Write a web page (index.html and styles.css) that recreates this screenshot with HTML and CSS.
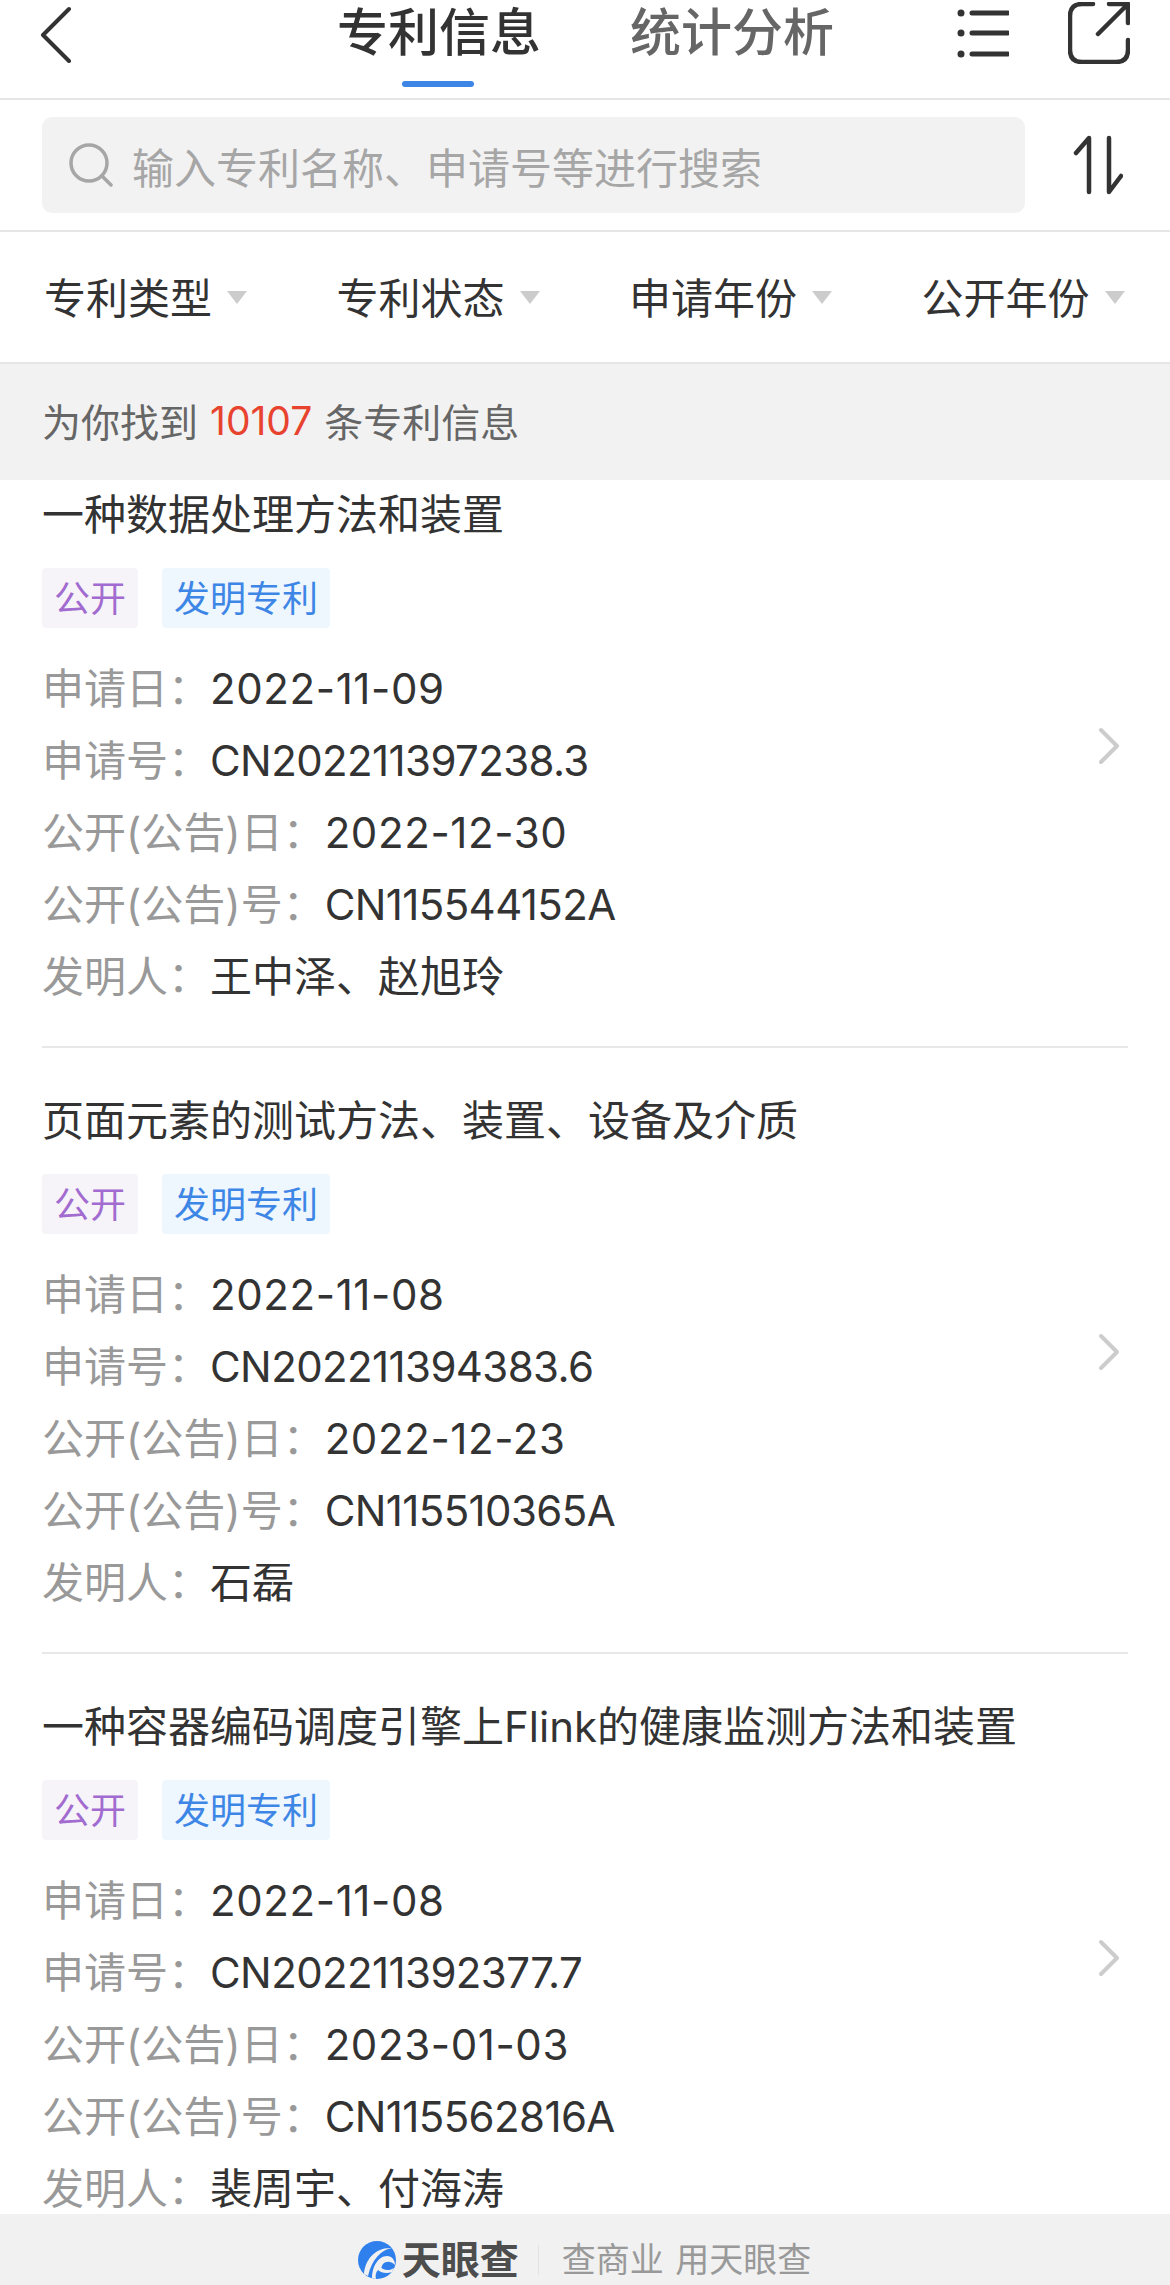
FILE: index.html
```html
<!DOCTYPE html>
<html lang="zh-CN">

<head>
    <meta charset="UTF-8">
    <title>专利信息</title>
    <link rel="stylesheet" href="styles.css">
</head>

<body>
    <div class="page">
        <header class="topbar">
            <svg class="icon-back" width="32" height="60" viewBox="0 0 32 60">
                <path d="M29 6 L3 32 L29 58" />
            </svg>
            <nav class="tabs">
                <a class="tab active">专利信息</a>
                <a class="tab">统计分析</a>
            </nav>
            <svg class="icon-list" width="52" height="50" viewBox="0 0 52 50">
                <circle cx="4" cy="5" r="3.5" />
                <circle cx="4" cy="25" r="3.5" />
                <circle cx="4" cy="46" r="3.5" />
                <path d="M15 5 H51 M15 25 H51 M15 46 H51" />
            </svg>
            <svg class="icon-share" width="62" height="62" viewBox="0 0 62 62">
                <path d="M25 2 H14 Q2 2 2 14 V48 Q2 60 14 60 H48 Q60 60 60 48 V38" />
                <path d="M41 2 H60 V21 M59 3 L30 32" />
            </svg>
        </header>

        <div class="searchbar">
            <div class="searchbox">
                <svg class="icon-search" width="46" height="44" viewBox="0 0 46 44">
                    <circle cx="21" cy="20" r="18" />
                    <path d="M34 33 L43 42" />
                </svg>
                <span>输入专利名称、申请号等进行搜索</span>
            </div>
            <svg class="icon-sort" width="50" height="60" viewBox="0 0 50 60">
                <path d="M16 57 V3 L3 18" />
                <path d="M36 3 V57 L48 41" />
            </svg>
        </div>

        <div class="filters">
            <div class="filter">专利类型<i class="caret"></i></div>
            <div class="filter">专利状态<i class="caret"></i></div>
            <div class="filter">申请年份<i class="caret"></i></div>
            <div class="filter">公开年份<i class="caret"></i></div>
        </div>

        <div class="count">为你找到 <em>10107</em> 条专利信息</div>

        <div class="list">
            <div class="list-inner">
                <section class="card">
                    <div class="card-body">
                        <h2 class="card-title">一种数据处理方法和装置</h2>
                        <div class="tags"><span class="tag tag-purple">公开</span><span class="tag tag-blue">发明专利</span></div>
                        <div class="row"><span class="label">申请日：</span><span class="date">2022-11-09</span></div>
                        <div class="row"><span class="label">申请号：</span><span class="code">CN202211397238.3</span></div>
                        <div class="row"><span class="label">公开(公告)日：</span><span class="date">2022-12-30</span></div>
                        <div class="row"><span class="label">公开(公告)号：</span><span class="code">CN115544152A</span></div>
                        <div class="row"><span class="label">发明人：</span><span>王中泽、赵旭玲</span></div>
                    </div>
                    <svg class="chevron" width="22" height="38" viewBox="0 0 22 38"><path d="M3 3 L19 19 L3 35" /></svg>
                </section>

                <section class="card">
                    <div class="card-body">
                        <h2 class="card-title">页面元素的测试方法、装置、设备及介质</h2>
                        <div class="tags"><span class="tag tag-purple">公开</span><span class="tag tag-blue">发明专利</span></div>
                        <div class="row"><span class="label">申请日：</span><span class="date">2022-11-08</span></div>
                        <div class="row"><span class="label">申请号：</span><span class="code">CN202211394383.6</span></div>
                        <div class="row"><span class="label">公开(公告)日：</span><span class="date">2022-12-23</span></div>
                        <div class="row"><span class="label">公开(公告)号：</span><span class="code">CN115510365A</span></div>
                        <div class="row"><span class="label">发明人：</span><span>石磊</span></div>
                    </div>
                    <svg class="chevron" width="22" height="38" viewBox="0 0 22 38"><path d="M3 3 L19 19 L3 35" /></svg>
                </section>

                <section class="card">
                    <div class="card-body">
                        <h2 class="card-title">一种容器编码调度引擎上Flink的健康监测方法和装置</h2>
                        <div class="tags"><span class="tag tag-purple">公开</span><span class="tag tag-blue">发明专利</span></div>
                        <div class="row"><span class="label">申请日：</span><span class="date">2022-11-08</span></div>
                        <div class="row"><span class="label">申请号：</span><span class="code">CN202211392377.7</span></div>
                        <div class="row"><span class="label">公开(公告)日：</span><span class="date">2023-01-03</span></div>
                        <div class="row"><span class="label">公开(公告)号：</span><span class="code">CN115562816A</span></div>
                        <div class="row"><span class="label">发明人：</span><span>裴周宇、付海涛</span></div>
                    </div>
                    <svg class="chevron" width="22" height="38" viewBox="0 0 22 38"><path d="M3 3 L19 19 L3 35" /></svg>
                </section>
            </div>
        </div>

        <footer class="footer">
            <svg class="logo" width="40" height="38" viewBox="0 0 40 38">
                <circle cx="20" cy="19" r="19" fill="#2f80ed" />
                <path d="M7 33 C8 19 18 6 35 7 C24 9 15 18 11 35 Z" fill="#f1f1f1" />
                <path d="M15 37 C15 26 21 15 30 15 C35 15 38 19 38 24 C34 20 29 20 26 23 C24 26 24 27 26 28 C30 30 34 29 37 27 L35 31 C30 33 24 32 21 29 C19 31 18 34 19 38 Z" fill="#f1f1f1" />
            </svg>
            <span class="brand">天眼查</span>
            <span class="sep"></span>
            <span class="slogan">查商业 用天眼查</span>
        </footer>
    </div>
</body>
</html>
```

FILE: styles.css
```css
* {
    box-sizing: border-box;
}

body {
    margin: 0;
    background-color: #fff;
    color: #333;
    font-family: Inter, "Noto Sans CJK SC", sans-serif;
}

.page {
    display: flex;
    flex-direction: column;
    height: 2285px;
    overflow: hidden;
}

svg {
    display: block;
    flex-shrink: 0;
    fill: none;
    stroke-linecap: round;
    stroke-linejoin: round;
}

/* top bar */
.topbar {
    display: flex;
    align-items: flex-start;
    height: 100px;
    border-bottom: 2px solid #e6e6e6;
    padding-left: 40px;
}

.icon-back {
    margin-top: 3px;
    stroke: #333;
    stroke-width: 4;
}

.tabs {
    display: flex;
    gap: 89px;
    margin-left: 265px;
}

.tab {
    position: relative;
    height: 98px;
    font-size: 51px;
    line-height: 65px;
    font-weight: 500;
    color: #666;
}

.tab.active {
    color: #333;
}

.tab.active::after {
    content: "";
    position: absolute;
    left: 65px;
    top: 81px;
    width: 72px;
    height: 6px;
    border-radius: 3px;
    background-color: #3d86e6;
}

.icon-list {
    margin: 8px 0 0 123px;
    fill: #333;
    stroke: #333;
    stroke-width: 5;
}

.icon-list circle {
    stroke: none;
}

.icon-share {
    margin: 2px 0 0 59px;
    stroke: #333;
    stroke-width: 4.5;
}

/* search */
.searchbar {
    display: flex;
    align-items: center;
    height: 132px;
    border-bottom: 2px solid #e6e6e6;
    padding-left: 42px;
}

.searchbox {
    display: flex;
    align-items: center;
    width: 983px;
    height: 96px;
    padding-left: 26px;
    border-radius: 10px;
    background-color: #f2f2f2;
    font-size: 42px;
    color: #a6a6a6;
}

.icon-search {
    margin-right: 18px;
    stroke: #a6a6a6;
    stroke-width: 3.5;
}

.icon-sort {
    margin-left: 48px;
    stroke: #333;
    stroke-width: 4.5;
}

/* filters */
.filters {
    display: grid;
    grid-template-columns: repeat(4, 292.5px);
    align-items: center;
    height: 132px;
    border-bottom: 2px solid #e6e6e6;
    padding: 0 0 3px 44px;
}

.filter {
    display: flex;
    align-items: center;
    font-size: 42px;
    color: #333;
}

.caret {
    width: 0;
    height: 0;
    margin: 3px 0 0 15px;
    border-left: 10px solid transparent;
    border-right: 10px solid transparent;
    border-top: 13px solid #ccc;
}

/* result count */
.count {
    display: flex;
    align-items: center;
    gap: 12px;
    height: 116px;
    padding: 0 0 4px 42px;
    background-color: #f2f2f2;
    font-size: 39px;
    color: #666;
}

.count em {
    font-style: normal;
    color: #e8432e;
}

/* list */
.list {
    flex: 1;
    min-height: 0;
    overflow: hidden;
}

.list-inner {
    margin-top: -38px;
    padding: 0 42px;
}

.card {
    display: flex;
    align-items: center;
    padding: 43px 10px 33px 0;
    border-bottom: 2px solid #e8e8e8;
}

.card-body {
    flex: 1;
}

.card-title {
    margin: 0 0 23px;
    font-size: 42px;
    line-height: 60px;
    font-weight: 400;
    color: #333;
}

.tags {
    display: flex;
    gap: 24px;
    margin-bottom: 25px;
}

.tag {
    height: 60px;
    padding: 0 12px;
    border-radius: 4px;
    font-size: 36px;
    line-height: 62px;
}

.tag-purple {
    background-color: #f6f4f9;
    color: #a26bd0;
}

.tag-blue {
    background-color: #eef6fe;
    color: #3d86e6;
}

.row {
    display: flex;
    font-size: 42px;
    line-height: 72px;
}

.label {
    color: #999;
}

.date {
    letter-spacing: 0.6px;
}

.code {
    letter-spacing: -0.6px;
}

.chevron {
    margin-top: -6px;
    margin-right: -2px;
    stroke: #ccc;
    stroke-width: 4;
}

/* footer */
.footer {
    display: flex;
    align-items: center;
    justify-content: center;
    height: 71px;
    padding: 20px 2px 0 0;
    background-color: #f1f1f1;
}

.logo {
    margin-right: 5px;
}

.brand {
    font-size: 39px;
    line-height: 40px;
    font-weight: 700;
    color: #4d4d4d;
}

.sep {
    width: 1px;
    height: 30px;
    margin: 0 23px 0 19px;
    background-color: #e2e2e2;
}

.slogan {
    font-size: 34px;
    line-height: 40px;
    word-spacing: 2px;
    color: #999;
}
```
